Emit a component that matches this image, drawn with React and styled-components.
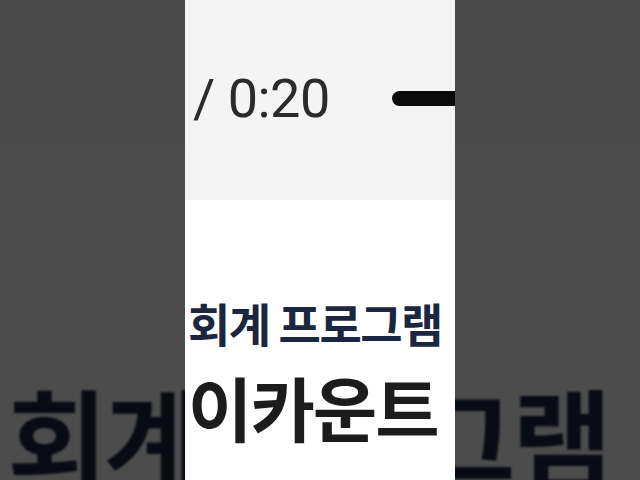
import styled, { createGlobalStyle } from "styled-components";

const Global = createGlobalStyle`
  html, body {
    margin: 0;
    padding: 0;
    background: #4b4b4b;
  }
`;

const Stage = styled.div`
  position: relative;
  width: 640px;
  height: 480px;
  overflow: hidden;
  display: flex;
  justify-content: center;
  background: #4b4b4b;
`;

// enlarged, dimmed copy of the clip behind the letterbox
const Backdrop = styled.div`
  position: absolute;
  inset: 0;
  display: flex;
  justify-content: center;
  align-items: center;
  filter: brightness(0.3) blur(1px);
  & > div {
    transform: scale(2.37);
  }
`;

const Frame = styled.div`
  position: relative;
  z-index: 1;
  width: 270px;
  height: 480px;
  flex-shrink: 0;
  overflow: hidden;
  display: flex;
  flex-direction: column;
  background: #fff;
`;

const Player = styled.div`
  height: 200px;
  background: #f4f4f4;
  padding-top: 68px;
  box-sizing: border-box;
`;

const ControlRow = styled.div`
  height: 60px;
  display: flex;
  align-items: center;
`;

const Time = styled.span`
  padding-left: 8px;
  font-family: Roboto, "Liberation Sans", sans-serif;
  font-size: 54px;
  color: #2b2b2b;
  letter-spacing: -0.5px;
`;

const Bar = styled.div`
  margin-left: auto;
  margin-right: -20px;
  width: 83px;
  height: 15px;
  border-radius: 8px;
  background: #0b0b0b;
`;

const Caption = styled.div`
  padding: 94px 0 0 3px;
  display: flex;
  flex-direction: column;
  font-family: "Noto Sans CJK KR", "Noto Sans", sans-serif;
  font-weight: 700;
`;

const Subtitle = styled.div`
  font-size: 46px;
  line-height: 56px;
  letter-spacing: -1.5px;
  color: #1b2640;
  white-space: nowrap;
`;

const Title = styled.div`
  margin-top: 16px;
  font-size: 70px;
  line-height: 82px;
  letter-spacing: -2px;
  color: #1c1c1c;
  white-space: nowrap;
`;

function Screen() {
  return (
    <Frame>
      <Player>
        <ControlRow>
          <Time>/ 0:20</Time>
          <Bar />
        </ControlRow>
      </Player>
      <Caption>
        <Subtitle>회계 프로그램</Subtitle>
        <Title>이카운트</Title>
      </Caption>
    </Frame>
  );
}

export default function App() {
  return (
    <>
      <Global />
      <Stage>
        <Backdrop>
          <Screen />
        </Backdrop>
        <Screen />
      </Stage>
    </>
  );
}
